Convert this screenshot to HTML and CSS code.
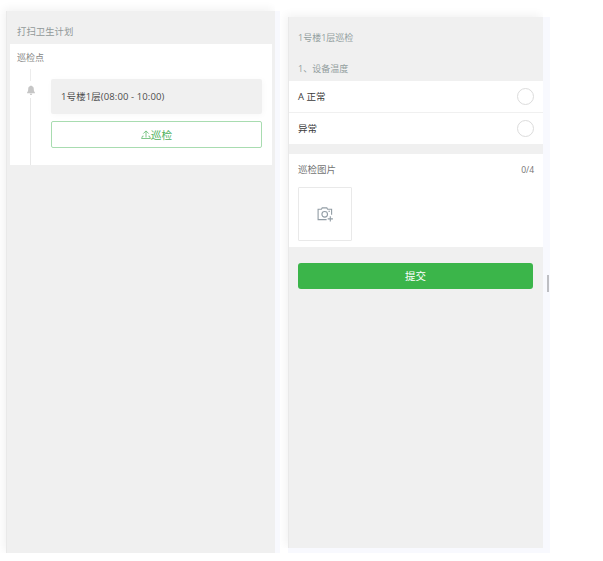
FILE: index.html
```html
<!DOCTYPE html>
<html lang="zh-CN">
<head>
<meta charset="utf-8">
<title>打扫卫生计划</title>
<link rel="stylesheet" href="styles.css">
</head>
<body>
<main class="stage">
  <div class="frame frame-plan">
    <section class="phone plan">
      <h1 class="plan-title">打扫卫生计划</h1>
      <div class="plan-card">
        <h2 class="plan-subtitle">巡检点</h2>
        <div class="timeline">
          <div class="rail">
            <span class="rail-top"></span>
            <svg class="bell" viewBox="0 0 8 10"><path d="M3.3 1.1a.7.7 0 0 1 1.4 0C6.2 1.4 6.8 2.7 6.8 4.3c0 1.6.4 2.4 1.1 3.1v.8H.1v-.8C.8 6.7 1.2 5.9 1.2 4.3c0-1.6.6-2.9 2.1-3.2zM2.8 8.7h2.4a1.2 1.2 0 0 1-2.4 0z" fill="#c6c6c6"/></svg>
            <span class="rail-bottom"></span>
          </div>
          <div class="tasks">
            <div class="place">1号楼1层(08:00 - 10:00)</div>
            <button class="inspect">
              <svg class="upload" viewBox="0 0 10 10"><path d="M5 7.5V1M2.3 3.6 5 .9l2.7 2.7M2.6 6.1H1.5L.6 8.5h8.8l-.9-2.4H7.4" fill="none" stroke="#5fb96d" stroke-width=".8"/></svg><span>巡检</span>
            </button>
          </div>
        </div>
      </div>
    </section>
  </div>
  <div class="frame frame-form">
    <section class="phone form">
      <h1 class="form-title">1号楼1层巡检</h1>
      <h2 class="question">1、设备温度</h2>
      <label class="option"><span>A 正常</span><i class="radio"></i></label>
      <label class="option"><span>异常</span><i class="radio"></i></label>
      <div class="photos">
        <div class="photos-head"><span>巡检图片</span><span class="count">0/4</span></div>
        <div class="picker">
          <svg class="camera" viewBox="0 0 16 15"><g fill="none" stroke="#929da5" stroke-width="1.1"><path d="M9.6 12.6H1.1V2.2h3.3l.8-1.3h4.6l.8 1.3h4v5.6M11.4 4.2h1.6"/><circle cx="7.7" cy="7.3" r="2.8"/><path d="M13.3 9.3v5.2M10.7 11.9h5.2"/></g></svg>
        </div>
      </div>
      <button class="submit">提交</button>
    </section>
    <span class="scroll-thumb"></span>
  </div>
</main>
</body>
</html>
```
FILE: styles.css
```css
* {
  box-sizing: border-box;
}

body {
  margin: 0;
  width: 603px;
  height: 561px;
  overflow: hidden;
  background: #fff;
  font-family: "Open Sans", "Noto Sans CJK SC", sans-serif;
  font-weight: 400;
}

h1,
h2 {
  margin: 0;
  font-weight: 400;
}

button {
  display: flex;
  align-items: center;
  justify-content: center;
  padding: 0;
  font-family: inherit;
}

.stage {
  display: flex;
  height: 553px;
  overflow: hidden;
}

.frame {
  position: relative;
  background: #f8f9fe;
}

.frame-plan {
  width: 274px;
  margin: 11px 0 0 6px;
}

.frame-form {
  width: 262px;
  margin: 17px 0 0 8px;
}

.phone {
  background: #f0f0f0;
  border-left: 1px solid #e9e9e9;
  box-shadow: -2px -2px 9px rgba(0, 0, 0, 0.06);
  clip-path: inset(-12px 0 0 -8px);
}

.plan {
  width: 269px;
  height: 542px;
  padding: 0 3px;
}

.plan-title {
  height: 33px;
  padding: 11px 7px 0;
  font-size: 9.4px;
  line-height: 20px;
  color: #929999;
}

.plan-card {
  width: 262px;
  height: 121px;
  background: #fff;
}

.plan-subtitle {
  height: 25px;
  padding: 4px 7px 0;
  font-size: 9px;
  line-height: 20px;
  color: #858585;
}

.timeline {
  display: flex;
  height: 96px;
}

.rail {
  display: flex;
  flex-direction: column;
  align-items: center;
  width: 41px;
}

.rail-top {
  width: 1px;
  height: 12px;
  background: #ececec;
}

.bell {
  width: 8px;
  height: 10px;
  margin: 4px 0 3px;
}

.rail-bottom {
  width: 1px;
  flex: 1;
  background: #e8e8e8;
}

.tasks {
  width: 211px;
  padding-top: 10px;
}

.place {
  height: 35px;
  padding-left: 10px;
  border-radius: 2px;
  background: #f0f0f0;
  box-shadow: 1px 1px 6px rgba(0, 0, 0, 0.03);
  font-size: 9.5px;
  letter-spacing: 0.1px;
  line-height: 35px;
  color: #4d4d4d;
}

.inspect {
  width: 211px;
  height: 27px;
  margin-top: 7px;
  border: 1px solid #a8dcb0;
  border-radius: 2px;
  background: #fff;
  font-size: 10.7px;
  color: #4eb15d;
}

.upload {
  width: 10px;
  height: 10px;
}

.form {
  width: 255px;
  height: 531px;
}

.form-title {
  height: 40px;
  padding: 11px 9px 0;
  font-size: 9px;
  line-height: 20px;
  color: #929e9e;
}

.question {
  height: 24px;
  padding: 2px 9px 0;
  font-size: 9px;
  line-height: 20px;
  color: #929e9e;
}

.option {
  display: flex;
  align-items: center;
  justify-content: space-between;
  height: 31px;
  padding: 0 9px;
  background: #fff;
  font-size: 9.5px;
  line-height: 14px;
  color: #3c3c3c;
}

.option + .option {
  height: 32px;
  border-top: 1px solid #f0f0f0;
}

.radio {
  width: 17px;
  height: 17px;
  border: 1px solid #dcdcdc;
  border-radius: 50%;
}

.photos {
  height: 93px;
  margin-top: 10px;
  padding: 6px 9px 0;
  background: #fff;
}

.photos-head {
  display: flex;
  justify-content: space-between;
  height: 27px;
  font-size: 9.5px;
  line-height: 20px;
  color: #737373;
}

.count {
  font-size: 8.5px;
}

.picker {
  display: flex;
  align-items: center;
  justify-content: center;
  width: 54px;
  height: 54px;
  border: 1px solid #e9e9e9;
  border-radius: 1px;
}

.camera {
  width: 16px;
  height: 15px;
}

.submit {
  width: 235px;
  height: 26px;
  margin: 16px 0 0 9px;
  padding-bottom: 1px;
  border: 0;
  border-radius: 3px;
  background: #3bb54a;
  font-size: 10.5px;
  color: #fff;
}

.scroll-thumb {
  position: absolute;
  top: 258px;
  right: 1px;
  width: 2px;
  height: 17px;
  background: #bdbec3;
}
```
